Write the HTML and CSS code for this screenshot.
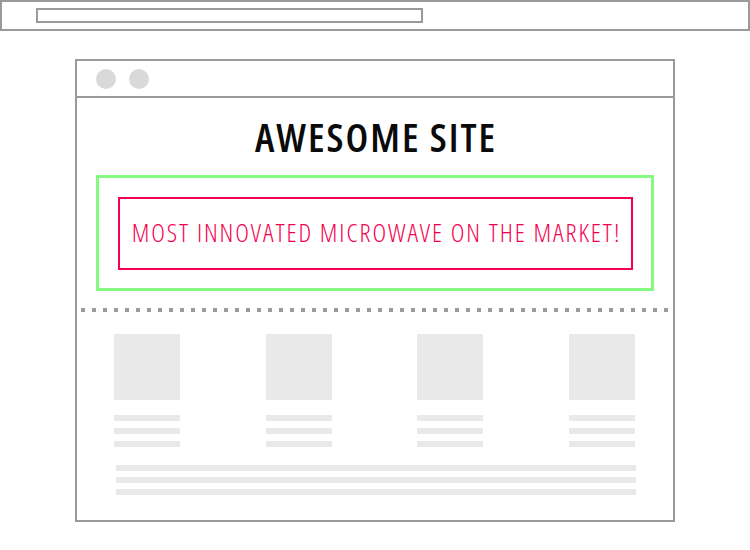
FILE: index.html
```html
<!DOCTYPE html>
<html>
<head>
<meta charset="utf-8">
<link rel="stylesheet" href="styles.css">
</head>
<body>
<div class="topbar"><div class="address"></div></div>
<div class="window">
  <div class="titlebar"><span class="dot"></span><span class="dot"></span></div>
  <div class="content">
    <h1 class="title">AWESOME SITE</h1>
    <div class="hero"><div class="banner">MOST INNOVATED MICROWAVE ON THE MARKET!</div></div>
    <div class="divider"></div>
    <div class="cards">
      <div class="card"><div class="thumb"></div><div class="line"></div><div class="line"></div><div class="line"></div></div>
      <div class="card"><div class="thumb"></div><div class="line"></div><div class="line"></div><div class="line"></div></div>
      <div class="card"><div class="thumb"></div><div class="line"></div><div class="line"></div><div class="line"></div></div>
      <div class="card"><div class="thumb"></div><div class="line"></div><div class="line"></div><div class="line"></div></div>
    </div>
    <div class="text-lines">
      <div class="tline"></div>
      <div class="tline"></div>
      <div class="tline"></div>
    </div>
  </div>
</div>
</body>
</html>
```
FILE: styles.css
```css
* { box-sizing: border-box; }
html, body { margin: 0; padding: 0; background: #fff; }
body { font-family: "Open Sans", "Liberation Sans", sans-serif; width: 750px; height: 550px; overflow: hidden; }

.topbar {
  width: 750px;
  height: 31px;
  border: 2px solid #9a9a9a;
  padding: 6px 0 0 34px;
}
.address {
  width: 387px;
  height: 15px;
  border: 2px solid #9a9a9a;
}

.window {
  margin: 28px 0 0 75px;
  width: 600px;
  height: 463px;
  border: 2px solid #9a9a9a;
}
.titlebar {
  height: 37px;
  border-bottom: 2px solid #9a9a9a;
  display: flex;
  align-items: center;
  gap: 13px;
  padding: 0 0 0 19px;
}
.dot {
  width: 20px;
  height: 20px;
  border-radius: 50%;
  background: #d9d9d9;
}

.content {
  display: flex;
  flex-direction: column;
}
.title {
  margin: 19px 0 0 0;
  padding-left: 2px;
  font-size: 40px;
  line-height: 40px;
  font-weight: 600;
  font-stretch: 75%;
  letter-spacing: 2px;
  text-align: center;
  color: #0a0a0a;
}
.hero {
  margin: 18px 19px 0 19px;
  height: 116px;
  border: 3px solid #84fa80;
  padding: 19px 18px 18px 19px;
}
.banner {
  height: 73px;
  border: 2px solid #f5004f;
  color: #f5004f;
  display: flex;
  align-items: center;
  justify-content: center;
  padding: 0 0 4px 2px;
  font-size: 26px;
  font-weight: 300;
  font-stretch: 80%;
  letter-spacing: 1.9px;
}
.divider {
  margin: 17px 0 0 4px;
  width: 587px;
  height: 4px;
  background: repeating-linear-gradient(to right, #9a9a9a 0 4px, transparent 4px 11px);
}
.cards {
  margin: 22px 0 0 37px;
  width: 521px;
  display: flex;
  justify-content: space-between;
}
.card {
  width: 66px;
  display: flex;
  flex-direction: column;
  gap: 7px;
}
.thumb {
  width: 66px;
  height: 66px;
  background: #e9e9e9;
  margin-bottom: 8px;
}
.line {
  height: 6px;
  background: #e9e9e9;
}
.text-lines {
  margin: 18px 0 0 39px;
  width: 520px;
  display: flex;
  flex-direction: column;
  gap: 6px;
}
.tline {
  height: 6px;
  background: #e9e9e9;
}
```
